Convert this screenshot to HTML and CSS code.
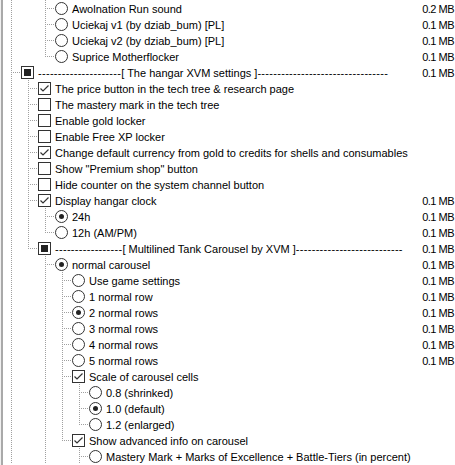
FILE: index.html
```html
<!DOCTYPE html>
<html lang="en">
<head>
  <meta charset="UTF-8" />
  <title>Select Components</title>
  <link rel="stylesheet" href="styles.css">
</head>
<body>
  <div class="tree">
    <!-- sound pack choices -->
    <div class="row"><span class="g gp"></span><span class="g"></span><span class="g gt"></span><span class="radio"></span><span class="label">Awolnation Run sound</span><span class="size">0.2 MB</span></div>
    <div class="row"><span class="g gp"></span><span class="g"></span><span class="g gt"></span><span class="radio"></span><span class="label">Uciekaj v1 (by dziab_bum) [PL]</span><span class="size">0.1 MB</span></div>
    <div class="row"><span class="g gp"></span><span class="g"></span><span class="g gt"></span><span class="radio"></span><span class="label">Uciekaj v2 (by dziab_bum) [PL]</span><span class="size">0.1 MB</span></div>
    <div class="row"><span class="g gp"></span><span class="g"></span><span class="g ge"></span><span class="radio"></span><span class="label">Suprice Motherflocker</span><span class="size">0.1 MB</span></div>

    <!-- hangar group -->
    <div class="row"><span class="g gt"></span><span class="box mixed"></span><span class="label"><span class="dash">---------------------</span>[ The hangar XVM settings ]<span class="dash">---------------------------------</span></span><span class="size">0.1 MB</span></div>
    <div class="row"><span class="g gp"></span><span class="g gt"></span><span class="box"><svg class="tick" viewBox="0 0 11 11"><path d="M1.5 5.5 4 8 9.5 2.5"/></svg></span><span class="label">The price button in the tech tree &amp; research page</span></div>
    <div class="row"><span class="g gp"></span><span class="g gt"></span><span class="box"></span><span class="label">The mastery mark in the tech tree</span></div>
    <div class="row"><span class="g gp"></span><span class="g gt"></span><span class="box"></span><span class="label">Enable gold locker</span></div>
    <div class="row"><span class="g gp"></span><span class="g gt"></span><span class="box"></span><span class="label">Enable Free XP locker</span></div>
    <div class="row"><span class="g gp"></span><span class="g gt"></span><span class="box"><svg class="tick" viewBox="0 0 11 11"><path d="M1.5 5.5 4 8 9.5 2.5"/></svg></span><span class="label">Change default currency from gold to credits for shells and consumables</span></div>
    <div class="row"><span class="g gp"></span><span class="g gt"></span><span class="box"></span><span class="label">Show "Premium shop" button</span></div>
    <div class="row"><span class="g gp"></span><span class="g gt"></span><span class="box"></span><span class="label">Hide counter on the system channel button</span></div>
    <div class="row"><span class="g gp"></span><span class="g gt"></span><span class="box"><svg class="tick" viewBox="0 0 11 11"><path d="M1.5 5.5 4 8 9.5 2.5"/></svg></span><span class="label">Display hangar clock</span><span class="size">0.1 MB</span></div>
    <div class="row"><span class="g gp"></span><span class="g gp"></span><span class="g gt"></span><span class="radio on"></span><span class="label">24h</span><span class="size">0.1 MB</span></div>
    <div class="row"><span class="g gp"></span><span class="g gp"></span><span class="g ge"></span><span class="radio"></span><span class="label">12h (AM/PM)</span><span class="size">0.1 MB</span></div>

    <!-- carousel group -->
    <div class="row"><span class="g gp"></span><span class="g ge"></span><span class="box mixed"></span><span class="label"><span class="dash">-----------------</span>[ Multilined Tank Carousel by XVM ]<span class="dash">---------------------------</span></span><span class="size">0.1 MB</span></div>
    <div class="row"><span class="g gp"></span><span class="g"></span><span class="g gt"></span><span class="radio on"></span><span class="label">normal carousel</span><span class="size">0.1 MB</span></div>
    <div class="row"><span class="g gp"></span><span class="g"></span><span class="g gp"></span><span class="g gt"></span><span class="radio"></span><span class="label">Use game settings</span><span class="size">0.1 MB</span></div>
    <div class="row"><span class="g gp"></span><span class="g"></span><span class="g gp"></span><span class="g gt"></span><span class="radio"></span><span class="label">1 normal row</span><span class="size">0.1 MB</span></div>
    <div class="row"><span class="g gp"></span><span class="g"></span><span class="g gp"></span><span class="g gt"></span><span class="radio on"></span><span class="label">2 normal rows</span><span class="size">0.1 MB</span></div>
    <div class="row"><span class="g gp"></span><span class="g"></span><span class="g gp"></span><span class="g gt"></span><span class="radio"></span><span class="label">3 normal rows</span><span class="size">0.1 MB</span></div>
    <div class="row"><span class="g gp"></span><span class="g"></span><span class="g gp"></span><span class="g gt"></span><span class="radio"></span><span class="label">4 normal rows</span><span class="size">0.1 MB</span></div>
    <div class="row"><span class="g gp"></span><span class="g"></span><span class="g gp"></span><span class="g gt"></span><span class="radio"></span><span class="label">5 normal rows</span><span class="size">0.1 MB</span></div>
    <div class="row"><span class="g gp"></span><span class="g"></span><span class="g gp"></span><span class="g gt"></span><span class="box"><svg class="tick" viewBox="0 0 11 11"><path d="M1.5 5.5 4 8 9.5 2.5"/></svg></span><span class="label">Scale of carousel cells</span></div>
    <div class="row"><span class="g gp"></span><span class="g"></span><span class="g gp"></span><span class="g gp"></span><span class="g gt"></span><span class="radio"></span><span class="label">0.8 (shrinked)</span></div>
    <div class="row"><span class="g gp"></span><span class="g"></span><span class="g gp"></span><span class="g gp"></span><span class="g gt"></span><span class="radio on"></span><span class="label">1.0 (default)</span></div>
    <div class="row"><span class="g gp"></span><span class="g"></span><span class="g gp"></span><span class="g gp"></span><span class="g ge"></span><span class="radio"></span><span class="label">1.2 (enlarged)</span></div>
    <div class="row"><span class="g gp"></span><span class="g"></span><span class="g gp"></span><span class="g ge"></span><span class="box"><svg class="tick" viewBox="0 0 11 11"><path d="M1.5 5.5 4 8 9.5 2.5"/></svg></span><span class="label">Show advanced info on carousel</span></div>
    <div class="row"><span class="g gp"></span><span class="g"></span><span class="g gp"></span><span class="g"></span><span class="g gt"></span><span class="radio"></span><span class="label">Mastery Mark + Marks of Excellence + Battle-Tiers (in percent)</span></div>
  </div>
</body>
</html>
```

FILE: styles.css
```css
* {
  box-sizing: border-box;
}

body {
  margin: 0;
  background: #fff;
  font-family: "Liberation Sans", Arial, sans-serif;
  font-size: 11px;
  color: #000;
}

/* list pane, grey frame on the left */
.tree {
  height: 465px;
  overflow: hidden;
  padding-left: 3px;
  background: linear-gradient(to right, #f0f0f0 0 1px, #a9a9a9 1px 3px, #fff 3px);
}

.row {
  display: flex;
  align-items: center;
  height: 16px;
}

/* indent cells with dotted connector lines */
.g {
  flex: 0 0 17px;
  height: 16px;
}

.gp {
  background: repeating-linear-gradient(to bottom, #a0a0a0 0 1px, transparent 1px 2px) 8px 0 / 1px 16px no-repeat;
}

.gt {
  background:
    repeating-linear-gradient(to bottom, #a0a0a0 0 1px, transparent 1px 2px) 8px 0 / 1px 16px no-repeat,
    repeating-linear-gradient(to right, #a0a0a0 0 1px, transparent 1px 2px) 10px 8px / 7px 1px no-repeat;
}

.ge {
  background:
    repeating-linear-gradient(to bottom, #a0a0a0 0 1px, transparent 1px 2px) 8px 0 / 1px 9px no-repeat,
    repeating-linear-gradient(to right, #a0a0a0 0 1px, transparent 1px 2px) 10px 8px / 7px 1px no-repeat;
}

/* check boxes and radio buttons */
.box,
.radio {
  position: relative;
  flex: 0 0 13px;
  height: 13px;
  margin-left: 1px;
  border: 1px solid #333;
  background: #fff;
}

.radio {
  border-radius: 50%;
}

.radio.on::after {
  content: "";
  position: absolute;
  left: 3px;
  top: 3px;
  width: 5px;
  height: 5px;
  border-radius: 50%;
  background: #222;
}

.mixed::after {
  content: "";
  position: absolute;
  left: 2px;
  top: 2px;
  width: 7px;
  height: 7px;
  background: #222;
}

.tick {
  display: block;
  width: 11px;
  height: 11px;
  fill: none;
  stroke: #333;
  stroke-width: 1.2;
}

.label {
  flex: 1;
  min-width: 0;
  height: 16px;
  padding: 1px 0 0 4px;
  line-height: 16px;
  white-space: nowrap;
  overflow: hidden;
}

.dash {
  letter-spacing: 0.3px;
}

.size {
  height: 16px;
  padding: 1px 1px 0 8px;
  line-height: 16px;
  letter-spacing: -0.5px;
  white-space: nowrap;
}
```
